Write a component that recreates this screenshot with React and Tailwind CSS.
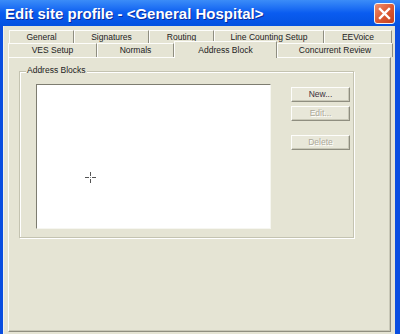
import React from 'react';

const row1 = [
  { label: 'General', w: 65 },
  { label: 'Signatures', w: 75 },
  { label: 'Routing', w: 65 },
  { label: 'Line Counting Setup', w: 110 },
  { label: 'EEVoice', w: 68 },
];

const row2 = [
  { label: 'VES Setup', w: 89 },
  { label: 'Normals', w: 77 },
  { label: 'Address Block', w: 103, active: true },
  { label: 'Concurrent Review', w: 116 },
];

function Tab({ label, w, active }) {
  if (active) {
    return (
      <div
        className="relative z-10 -mt-[2px] h-[17px] flex items-start justify-center pt-[2px] bg-[#e5e4d4] border-t border-l border-r border-t-[#fdfdfb] border-l-[#fdfdfb] border-r-[#8f8e80] shrink-0"
        style={{ width: w }}
      >
        {label}
      </div>
    );
  }
  return (
    <div
      className="h-full flex items-center justify-center bg-[#e5e4d4] border-t border-l border-r border-t-[#fdfdfb] border-l-[#fdfdfb] border-r-[#8f8e80] shrink-0"
      style={{ width: w }}
    >
      {label}
    </div>
  );
}

function XpButton({ children, disabled }) {
  return (
    <div
      className={`w-[59px] h-[15px] flex items-center justify-center border border-t-[#fdfdfb] border-l-[#fdfdfb] border-r-[#8f8e80] border-b-[#8f8e80] shadow-[inset_-1px_-1px_0_#c9c8b8] bg-[#e8e7d9] ${
        disabled ? 'text-[#aca899] [text-shadow:1px_1px_0_#ffffff]' : 'text-[#3c2f3c]'
      }`}
    >
      {children}
    </div>
  );
}

export default function App() {
  return (
    <div className="w-[400px] h-[334px] flex flex-col bg-[#0a4ee0] font-['Liberation_Sans',Arial,sans-serif] text-[8.5px] text-[#222] overflow-hidden">
      {/* Title bar */}
      <div className="h-[26px] shrink-0 flex items-center justify-between pl-[5px] pr-[5px] bg-linear-to-b from-[#3b8cf8] via-[#0a5cf0] to-[#0452e0]">
        <span className="text-[15px] font-bold text-white [text-shadow:1px_1px_0_#0b2a9a] leading-none">
          Edit site profile - &lt;General Hospital&gt;
        </span>
        <div className="w-[21px] h-[21px] rounded-[3px] border border-[#f4f4f4] bg-linear-to-br from-[#ef8e6e] via-[#dc5a34] to-[#c4401c] flex items-center justify-center">
          <svg width="13" height="13" viewBox="0 0 13 13">
            <path d="M2 2 L11 11 M11 2 L2 11" stroke="#fff" strokeWidth="2.4" strokeLinecap="square" />
          </svg>
        </div>
      </div>

      {/* Client area */}
      <div className="flex-1 flex flex-col bg-[#e5e4d4] ml-[3px] mr-[5px] pl-[4px] pr-[4px] pt-[4px] pb-[2px] border-l border-l-[#f2f2ea]">
        <div className="h-[13px] flex pl-[1px]">
          {row1.map((t) => (
            <Tab key={t.label} {...t} />
          ))}
        </div>
        <div className="h-[14px] flex">
          {row2.map((t) => (
            <Tab key={t.label} {...t} />
          ))}
        </div>

        {/* Tab panel */}
        <div className="flex-1 border border-t-[#fdfdfb] border-l-[#fdfdfb] border-r-[#8f8e80] border-b-[#8f8e80] shadow-[inset_-1px_-1px_0_#c9c8b8] pl-[10px] pt-[13px] pr-[36px]">
          {/* Group box */}
          <div className="relative h-[167px] border border-[#c4c3b1] shadow-[inset_1px_1px_0_#ffffff,1px_1px_0_#ffffff] pl-[16px] pt-[12px] pr-[3px] pb-[7px] flex gap-[20px]">
            <span className="absolute -top-[6px] left-[6px] bg-[#e5e4d4] px-[1px] leading-none">
              Address Blocks
            </span>

            {/* List box */}
            <div className="relative w-[236px] h-[145px] bg-white border border-t-[#7d7c70] border-l-[#7d7c70] border-r-[#f6f6f0] border-b-[#f6f6f0]">
              <svg className="absolute left-[48px] top-[87px]" width="11" height="11" viewBox="0 0 11 11">
                <path d="M5.5 0 V4 M5.5 7 V11 M0 5.5 H4 M7 5.5 H11" stroke="#555" strokeWidth="1" />
                <rect x="5" y="5" width="1" height="1" fill="#888" />
              </svg>
            </div>

            {/* Buttons */}
            <div className="flex flex-col pt-[3px]">
              <XpButton>New...</XpButton>
              <div className="mt-[4px]">
                <XpButton disabled>Edit...</XpButton>
              </div>
              <div className="mt-[14px]">
                <XpButton disabled>Delete</XpButton>
              </div>
            </div>
          </div>
        </div>
      </div>
    </div>
  );
}
